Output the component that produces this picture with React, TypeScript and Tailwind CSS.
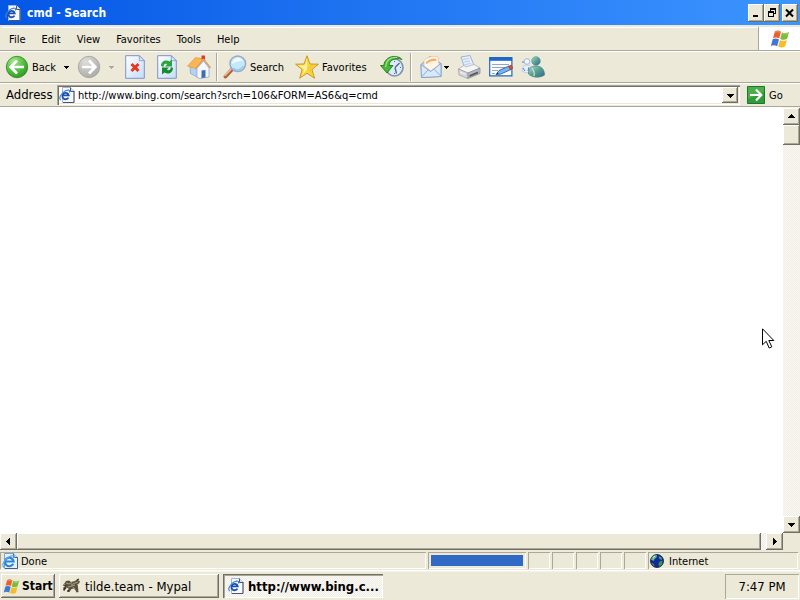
import React from 'react';

const raised =
  'bg-[#ece9d8] shadow-[inset_-1px_-1px_0_#716f64,inset_1px_1px_0_#ffffff,inset_-2px_-2px_0_#aca899]';
const panel = 'shadow-[inset_1px_1px_0_#aca899,inset_-1px_-1px_0_#ffffff]';
const track =
  'bg-[repeating-conic-gradient(#fbfaf7_0_25%,#efede3_0_50%)] bg-[length:2px_2px]';

function Caret({ dir = 'down' }: { dir?: 'down' | 'up' | 'left' | 'right' }) {
  const d = {
    down: 'M0 2h7v1h-1v1h-1v1h-1v1h-1v-1h-1v-1h-1v-1h-1z',
    up: 'M3 1h1v1h1v1h1v1h1v1h-7v-1h1v-1h1v-1h1z',
    left: 'M5 0v7h-1v-1h-1v-1h-1v-1h-1v-1h1v-1h1v-1h1v-1z',
    right: 'M2 0v7h1v-1h1v-1h1v-1h1v-1h-1v-1h-1v-1h-1v-1z',
  }[dir];
  return (
    <svg width="7" height="7" viewBox="0 0 7 7" className="shrink-0" shapeRendering="crispEdges">
      <path d={d} fill="#000" />
    </svg>
  );
}

function SmallCaret({ color = '#000' }: { color?: string }) {
  return (
    <svg width="5" height="5" viewBox="0 0 5 5" className="shrink-0" shapeRendering="crispEdges">
      <path d="M0 1h5v1h-1v1h-1v1h-1v-1h-1v-1h-1z" fill={color} />
    </svg>
  );
}

function IeIcon() {
  return (
    <svg width="16" height="16" viewBox="0 0 16 16" className="shrink-0">
      <path d="M3.500.500h8l3.500 3.500v11.500h-11.500z" fill="#f6f9ff" stroke="#a9b3c9" />
      <path d="M11.500.500v4h4" fill="#d5dff0" stroke="#4c5568" />
      <path d="M15 4.500v11H4" fill="none" stroke="#4c5568" />
      <path d="M9.400 10.600A3.200 3.200 0 1 1 9.700 8.300H4" fill="none" stroke="#1c50ae" strokeWidth="1.800" />
      <path d="M2 13C-1 12 2 6 6.500 3.800 9.500 2.400 11.500 3 10.300 5.600" fill="none" stroke="#3c83da" strokeWidth="1.200" />
    </svg>
  );
}

function PageStatusIcon() {
  return (
    <svg width="16" height="16" viewBox="0 0 16 16" className="shrink-0">
      <path d="M2.500.500h9l4 4v11h-13z" fill="#e6f1fd" stroke="#7ba0d2" />
      <path d="M11.500.500v4h4" fill="#c9dcf3" stroke="#42608f" />
      <path d="M15.500 4.500v11H3" fill="none" stroke="#42608f" />
      <path d="M11.200 10.800A4.300 4.300 0 1 1 11.600 8.500H4" fill="none" stroke="#2b86d8" strokeWidth="2.200" />
      <path d="M2 14.500C-1 12 2.500 6.500 7 4 10 2.300 13.500 1.800 12.500 5" fill="none" stroke="#5aaceb" strokeWidth="1.200" />
    </svg>
  );
}

function WinFlag({ size }: { size: number }) {
  return (
    <svg width={size} height={size} viewBox="0 0 20 20" className="shrink-0">
      <path d="M4.800 2.500C7 1 9 1.500 11 2.800L9.200 9.500C7.200 8.200 5 8 3 9.200z" fill="#e9602b" />
      <path d="M12 3.200c2 1.200 4.500 1.300 7-.2l-1.800 6.800c-2.400 1.400-4.800 1.200-7 .1z" fill="#7fba3c" />
      <path d="M2.700 10.200C4.800 9 7 9.200 9 10.500L7.200 17.200C5.200 16 3 15.700.9 17z" fill="#3e78d4" />
      <path d="M10 10.900c2 1.200 4.500 1.300 6.900 0l-1.800 6.700c-2.400 1.400-4.800 1.200-6.900 0z" fill="#f5bd2b" />
      <path d="M5.200 3.300c2-.9 3.500-.7 5 .2" fill="none" stroke="#f6a57e" strokeWidth=".8" />
      <path d="M12.500 4.500c2 .8 3.700.7 5.500 0" fill="none" stroke="#b4dc82" strokeWidth=".8" />
    </svg>
  );
}

function RoundArrow({ back = false }: { back?: boolean }) {
  return (
    <svg width="24" height="24" viewBox="0 0 24 24" className="shrink-0">
      <defs>
        <radialGradient id={back ? 'gBack' : 'gFwd'} cx=".35" cy=".25" r=".9">
          <stop offset="0" stopColor={back ? '#a5e68d' : '#dededa'} />
          <stop offset=".55" stopColor={back ? '#4fbb3c' : '#bdbdb9'} />
          <stop offset="1" stopColor={back ? '#248a1f' : '#a3a39f'} />
        </radialGradient>
      </defs>
      <circle cx="12" cy="12" r="10.700" fill={back ? 'url(#gBack)' : 'url(#gFwd)'} stroke={back ? '#2c8527' : '#a1a19d'} strokeWidth=".8" />
      <path
        d={back ? 'M12 5.500L5.700 12l6.300 6.500M6.500 12H19' : 'M12 5.500l6.300 6.500-6.300 6.500M17.500 12H5'}
        fill="none"
        stroke="#fff"
        strokeWidth="2.700"
      />
    </svg>
  );
}

function Page({ children }: { children: React.ReactNode }) {
  return (
    <svg width="20" height="24" viewBox="0 0 20 24" className="shrink-0">
      <defs>
        <linearGradient id="pageFill" x1="0" y1="0" x2="1" y2="1">
          <stop offset="0" stopColor="#ffffff" />
          <stop offset="1" stopColor="#c3dcfa" />
        </linearGradient>
      </defs>
      <path d="M.7.700h13.600l5 5v17.600H.7z" fill="url(#pageFill)" stroke="#7d93c9" />
      <path d="M14.300.700v5h5z" fill="#dce8fb" stroke="#7d93c9" strokeWidth=".8" />
      {children}
    </svg>
  );
}

function HomeIcon() {
  return (
    <svg width="24" height="24" viewBox="0 0 24 24" className="shrink-0">
      <path d="M3 11l8 1v10.500l-7.500-4z" fill="#b5d2f3" stroke="#7694c5" strokeWidth=".6" />
      <path d="M10 13L16.500 6l5.500 7v9l-9 1.500-3-1z" fill="#f4f8fe" stroke="#88a0c8" strokeWidth=".7" />
      <path d="M8.500 2.500l8 1.500L8.500 13.500.500 11z" fill="#fdb552" stroke="#e0913a" strokeWidth=".6" />
      <path d="M8.500 14L16.500 4.300 23.500 13" fill="none" stroke="#d9a269" strokeWidth="1.600" />
      <path d="M14.500.500h3.500v4.500l-1.500-1.500-2 1z" fill="#d3402b" />
      <path d="M14.500 15.500l4-.5v7.500l-4 .6z" fill="#3f6cae" />
    </svg>
  );
}

function SearchIcon() {
  return (
    <svg width="24" height="24" viewBox="0 0 24 24" className="shrink-0">
      <path d="M9 14.500l-6.500 7" stroke="#a96640" strokeWidth="3.800" strokeLinecap="round" />
      <path d="M8 14.200l-6 6.300" stroke="#f0bd97" strokeWidth="1.600" strokeLinecap="round" />
      <circle cx="14.800" cy="8.800" r="7.800" fill="#c5e8fb" stroke="#9aa9c8" strokeWidth="1.500" />
      <path d="M9 9c0-3.500 2.500-6 6-6 2.500 0 4.500 1.500 5 3-3-.5-7 .5-11 3z" fill="#f1faff" />
      <path d="M10 13c3 3 8 2.500 10.500-2" fill="none" stroke="#8fcaf2" strokeWidth="1.500" />
    </svg>
  );
}

function StarIcon() {
  return (
    <svg width="24" height="24" viewBox="0 0 24 24" className="shrink-0">
      <path d="M12 .8l3 8.200 8.400.2-6.500 5.300 2.700 8.700-7.600-5-7.300 5 2.400-8.700L.600 9.200 9 9z" fill="#fbd840" stroke="#cc9626" strokeLinejoin="round" />
      <path d="M12 3l-1.800 7.200-7 .2 6 4-2 6.300L12 14z" fill="#fff3a0" />
      <path d="M12 14l6 6-2.200-6 4.500-4-6 .5z" fill="#f8cb38" />
    </svg>
  );
}

function HistoryIcon() {
  return (
    <svg width="24" height="24" viewBox="0 0 24 24" className="shrink-0">
      <circle cx="14.500" cy="12.500" r="8.500" fill="#dcebfa" stroke="#7d90ac" strokeWidth="1.600" />
      <path d="M15 12.500L19.500 8M15 12.500l1.500 6" stroke="#526a91" strokeWidth="1.400" fill="none" />
      <path d="M14.500 6v1M21 12.500h-1M14.500 19v-1" stroke="#526a91" />
      <path d="M22 4.500C18-.5 5 0 3.800 10.500H.5l6.500 7.500 6-7.500H9C9.500 5 15 2 22 4.500z" fill="#48b934" stroke="#24751d" strokeWidth=".9" />
      <path d="M17 2.500C9 2 6 6.500 5.500 12" stroke="#a3e68d" fill="none" strokeWidth="1.200" />
    </svg>
  );
}

function MailIcon() {
  return (
    <svg width="22" height="24" viewBox="0 0 22 24" className="shrink-0">
      <path d="M1 9.500L10 1.500l11 7v13L1.500 22.500z" fill="#b9d5f5" stroke="#7f9cc4" strokeWidth=".9" />
      <path d="M4 5.500C8 1.500 14 .5 18 2l1 8-8 6-7-5z" fill="#fff5e8" stroke="#d9b898" strokeWidth=".6" />
      <path d="M5.500 7.500c3-3 7-4.500 10.500-3.800l.5 2.500c-4-.5-7 .5-10 3z" fill="#f5b06a" />
      <path d="M1 9.500l9.500 7L21 8.500v13L1.500 22.500z" fill="#d8e9fc" stroke="#7f9cc4" strokeWidth=".8" />
      <path d="M1.500 22l7-7.500M20.800 21l-7-7" stroke="#8dadd6" />
    </svg>
  );
}

function PrintIcon() {
  return (
    <svg width="24" height="24" viewBox="0 0 24 24" className="shrink-0">
      <path d="M4 2l9-1.500 4.500 11-9.500 2z" fill="#e7f1fe" stroke="#86a3cc" strokeWidth=".8" />
      <path d="M6 4.500l6-1M7 7l6-1M8 9.500l6-1" stroke="#a9bfdf" strokeWidth=".8" />
      <path d="M1.500 14l6-4 1 2 8.500-2.500 6 3.500-12 5z" fill="#f5f5f4" stroke="#a4a7ad" strokeWidth=".7" />
      <path d="M1.500 14l9.500 4v5.500L2 20z" fill="#d5d7dc" stroke="#979aa2" strokeWidth=".7" />
      <path d="M11 18l12-5v5.500l-12 5z" fill="#b6b8bd" stroke="#85888f" strokeWidth=".7" />
      <path d="M12.500 20l8.500-3.500v2l-8.500 3.500z" fill="#55595f" />
      <path d="M3 17l5 2" stroke="#f4f4f4" />
    </svg>
  );
}

function EditIcon() {
  return (
    <svg width="24" height="20" viewBox="0 0 24 20" className="shrink-0">
      <path d="M.7.700h22.200v18.200H.7z" fill="#f8fbff" stroke="#2666b5" strokeWidth="1.200" />
      <path d="M.5.500h22.600v3.300H.5z" fill="#1f66c5" />
      <path d="M3 7.500h17M3 10.500h13M3 13.500h6M3 16.500h3" stroke="#97a5ba" />
      <path d="M7 17.500l3-4L20 9l2 3.500-10.500 4.700z" fill="#76b4ec" stroke="#285490" strokeWidth=".8" />
      <path d="M7 17.500l1.700-2.200 1 1.500z" fill="#24374e" />
      <path d="M19.500 9.300l2.700-1.200 1.600 3-2.500 1.500z" fill="#df4a35" stroke="#9e2d20" strokeWidth=".6" />
    </svg>
  );
}

function PeopleIcon() {
  return (
    <svg width="24" height="24" viewBox="0 0 24 24" className="shrink-0">
      <defs>
        <linearGradient id="buddy" x1="0" y1="0" x2="1" y2="1">
          <stop offset="0" stopColor="#b4dccb" />
          <stop offset=".5" stopColor="#57a093" />
          <stop offset="1" stopColor="#2f6a88" />
        </linearGradient>
      </defs>
      <circle cx="6" cy="6.500" r="2.800" fill="#f1f7ff" stroke="#8aaad5" strokeWidth=".8" />
      <path d="M1 16c0-4 2-6 5-6 2 0 4 1 5 4l-2 4c-3 0-6-.5-8-2z" fill="#e6f0fc" stroke="#a5bee0" strokeWidth=".7" />
      <path d="M2 6v2M2 13l2 3M8 12l-1 4" stroke="#4f7fc4" />
      <circle cx="15" cy="6" r="4.300" fill="url(#buddy)" stroke="#4a8c86" strokeWidth=".6" />
      <path d="M7.500 19C7 13 11 11 15 11c5 0 8.500 3 8.500 9-4 3-12 3-16-1z" fill="url(#buddy)" stroke="#447d8a" strokeWidth=".7" />
      <path d="M11 13c2 3 3 5 2 8" stroke="#c1e6d4" strokeWidth="1.300" fill="none" />
    </svg>
  );
}

function GlobeIcon() {
  return (
    <svg width="14" height="14" viewBox="0 0 14 14" className="shrink-0">
      <circle cx="7" cy="7" r="6.500" fill="#0f2a9c" stroke="#0b1739" strokeWidth=".8" />
      <path d="M1 5.500C2 2.500 4 1 7 1L6.500 3.500 4.500 5 3.500 7z" fill="#6cb98c" />
      <path d="M8.500 2l3 1.500L12 6l-2.500-1z" fill="#4fa07c" />
      <path d="M9.500 7.500l3-1-.5 4-3 2.300L8.500 10z" fill="#3d9548" />
      <path d="M1.500 8.500l2.500 1.500.5 2.500-2-1.500z" fill="#3a8d46" />
      <path d="M3 3.500l2-1.500" stroke="#d5eedd" />
    </svg>
  );
}

function LizardIcon() {
  return (
    <svg width="18" height="16" viewBox="0 0 18 16" className="shrink-0">
      <path d="M1 6l2-3 3-.5 2 1.500 4-1 2-1.500 3 2-1 2-1.500.5.500 3 .5 5-2 .5-2-4-3 .5-2 3-2-.3 1-3.500-2-.7-2 3.500-1.500-.8.500-3 2.500-2z" fill="#5b513f" />
      <path d="M3 5l3 1 3-1.500M8 7l4-2 3-1M5 9l4-1 3-1M10 9l2 3" stroke="#b5a98f" fill="none" strokeWidth=".9" />
      <path d="M0 7l3 .5M1 11l2-1M14 2l2-1M5 12v2" stroke="#2c261c" strokeWidth="1.200" />
    </svg>
  );
}

function Divider() {
  return <span className="h-7 w-0.5 shrink-0 border-l border-[#aca899] bg-white" />;
}

function Caption({ children }: { children: React.ReactNode }) {
  return <span className="pt-0.5">{children}</span>;
}

function ScrollButton({ dir, label }: { dir: 'up' | 'down' | 'left' | 'right'; label: string }) {
  return (
    <button aria-label={label} className={`flex h-[17px] w-[17px] shrink-0 items-center justify-center ${raised}`}>
      <Caret dir={dir} />
    </button>
  );
}

const menus = ['File', 'Edit', 'View', 'Favorites', 'Tools', 'Help'];

export default function App() {
  return (
    <div className="relative flex h-screen flex-col overflow-hidden bg-[#ece9d8] font-['DejaVu_Sans_Condensed','DejaVu_Sans',sans-serif] text-[11px] leading-4 text-black">
      <header className="flex h-[25px] shrink-0 items-center bg-linear-to-r from-[#0456e5] to-[#3d95ff] pr-0.5 pl-[5px]">
        <IeIcon />
        <h1 className="ml-1.5 flex-1 text-xs font-bold text-white">cmd - Search</h1>
        <button aria-label="Minimize" className={`flex h-[18px] w-4 items-center justify-center ${raised}`}>
          <svg width="10" height="10" viewBox="0 0 10 10"><path d="M2 7h5v2H2z" /></svg>
        </button>
        <button aria-label="Restore" className={`flex h-[18px] w-4 items-center justify-center ${raised}`}>
          <svg width="10" height="10" viewBox="0 0 10 10" shapeRendering="crispEdges"><path d="M3 0h6v6H7V5h1V2H4v1H3zM1 3h6v6H1zM2 5v3h4V5z" fillRule="evenodd" /></svg>
        </button>
        <button aria-label="Close" className={`ml-0.5 flex h-[18px] w-4 items-center justify-center ${raised}`}>
          <svg width="10" height="10" viewBox="0 0 10 10"><path d="M1 1.500l7 7M8 1.500l-7 7" stroke="#000" strokeWidth="2" /></svg>
        </button>
      </header>

      <nav className="flex h-[26px] shrink-0 items-stretch border-b border-[#aca899] pt-0.5 pl-0.5">
        <div className="flex flex-1 items-center border-t border-white pt-0.5">
          {menus.map((m) => (
            <button key={m} className="mr-0.5 px-[7px]">{m}</button>
          ))}
        </div>
        <div className="flex w-[42px] items-center justify-center border-l border-[#aca899] bg-white">
          <WinFlag size={20} />
        </div>
      </nav>

      <div className="flex h-8 shrink-0 items-center border-t border-b border-t-white border-b-[#aca899] pl-[5px]">
        <button className="flex w-[51px] items-center gap-[3px]"><RoundArrow back /><Caption>Back</Caption></button>
        <button aria-label="Back history" className="ml-2"><SmallCaret /></button>
        <button aria-label="Forward" className="ml-2"><RoundArrow /></button>
        <button aria-label="Forward history" className="ml-2"><SmallCaret color="#aca899" /></button>
        <button aria-label="Stop" className="ml-[11px]">
          <Page><path d="M6.500 9l7 7M13.500 9l-7 7" stroke="#e5391d" strokeWidth="3" /></Page>
        </button>
        <button aria-label="Refresh" className="ml-3">
          <Page>
            <path d="M4 11C4 6 9 4 12.500 6.500L15 4.500v7H8l2.200-2.300C8.500 8 6.500 9 6.500 12z" fill="#2aa53e" />
            <path d="M16 13c0 5-5 7-8.500 4.500L5 19.500v-7h7l-2.200 2.300c2 1.200 4 .2 4-2.800z" fill="#168a2c" />
          </Page>
        </button>
        <button aria-label="Home" className="ml-2.5"><HomeIcon /></button>
        <span className="ml-[5px] flex"><Divider /></span>
        <button className="ml-[5px] flex w-[62px] items-center gap-[3px]"><SearchIcon /><Caption>Search</Caption></button>
        <button className="ml-2.5 flex w-[75px] items-center gap-[3px]"><StarIcon /><Caption>Favorites</Caption></button>
        <button aria-label="History" className="ml-2.5"><HistoryIcon /></button>
        <span className="ml-1.5 flex"><Divider /></span>
        <button aria-label="Mail" className="ml-2 flex items-center gap-0.5"><MailIcon /><SmallCaret /></button>
        <button aria-label="Print" className="ml-2"><PrintIcon /></button>
        <button aria-label="Edit page" className="ml-2"><EditIcon /></button>
        <button aria-label="Messenger" className="ml-2"><PeopleIcon /></button>
      </div>

      <form className="flex h-6 shrink-0 items-center border-t border-b border-t-white border-b-[#aca899] pl-1.5" onSubmit={(e) => e.preventDefault()}>
        <label htmlFor="address" className="w-[51px] text-[13px]">Address</label>
        <div className="flex h-5 flex-1 items-center bg-white px-0.5 shadow-[inset_1px_1px_0_#aca899,inset_2px_2px_0_#716f64,inset_-1px_-1px_0_#ffffff,inset_-2px_-2px_0_#ece9d8]">
          <IeIcon />
          <input id="address" defaultValue="http://www.bing.com/search?srch=106&FORM=AS6&q=cmd" className="ml-[3px] min-w-0 flex-1 bg-transparent pt-0.5 outline-none" />
          <button type="button" aria-label="Show addresses" className={`flex h-4 w-4 items-center justify-center ${raised}`}><Caret /></button>
        </div>
        <button className="mr-4 ml-[7px] flex w-[37px] items-center gap-1">
          <svg width="18" height="18" viewBox="0 0 18 18" className="shrink-0">
            <path d="M.5.500h17v17H.5z" fill="#319a3a" stroke="#1d7728" />
            <path d="M1 1h16v5L1 13z" fill="#5dbb59" opacity=".6" />
            <path d="M3 9h11M9 3.500L14.300 9 9 14.500" fill="none" stroke="#fff" strokeWidth="2.200" />
          </svg>
          <Caption>Go</Caption>
        </button>
      </form>

      <div className="flex min-h-0 flex-1">
        <main className="flex-1 bg-white" />
        <div className={`flex w-[17px] flex-col pt-px ${track}`}>
          <ScrollButton dir="up" label="Scroll up" />
          <div className={`h-5 ${raised}`} />
          <div className="flex-1" />
          <ScrollButton dir="down" label="Scroll down" />
        </div>
      </div>
      <div className="flex h-[17px] shrink-0 pr-[17px]">
        <ScrollButton dir="left" label="Scroll left" />
        <div className={`flex-1 ${raised}`} />
        <div className={`w-[5px] ${track}`} />
        <ScrollButton dir="right" label="Scroll right" />
      </div>

      <footer className="flex h-[21px] shrink-0 gap-0.5 border-b border-white pt-0.5 pr-0.5 pb-px">
        <div className={`flex flex-1 items-center gap-[3px] pl-0.5 ${panel}`}><PageStatusIcon /><Caption>Done</Caption></div>
        <div className={`w-[98px] p-[3px] ${panel}`}>
          <div role="progressbar" aria-label="Page loading" className="h-full bg-[#316ac5]" />
        </div>
        <div className={`w-[22px] ${panel}`} />
        <div className={`w-[22px] ${panel}`} />
        <div className={`w-[22px] ${panel}`} />
        <div className={`w-[22px] ${panel}`} />
        <div className={`w-[22px] ${panel}`} />
        <div className={`flex w-[150px] items-center gap-[5px] pl-0.5 ${panel}`}><GlobeIcon /><Caption>Internet</Caption></div>
      </footer>

      <div className="flex h-[29px] shrink-0 items-center gap-1 border-t border-[#f6f4e8] pr-px pl-px text-[13px]">
        <button className={`flex h-6 w-[54px] items-center gap-0.5 pl-0.5 text-xs font-bold ${raised}`}><WinFlag size={17} />Start</button>
        <button className={`flex h-6 w-40 items-center gap-1 pl-1 ${raised}`}><LizardIcon /><Caption>tilde.team - Mypal</Caption></button>
        <button className={`flex h-6 w-40 items-center gap-1 pl-[5px] font-bold shadow-[inset_1px_1px_0_#716f64,inset_2px_2px_0_#aca899,inset_-1px_-1px_0_#ffffff] ${track}`}><IeIcon /><Caption>http://www.bing.c...</Caption></button>
        <div className={`ml-auto flex h-[25px] w-[74px] items-center justify-center ${panel}`}><Caption>7:47 PM</Caption></div>
      </div>

      <svg width="13" height="21" viewBox="0 0 13 21" className="pointer-events-none absolute top-[328px] left-[762px]">
        <path d="M.5.800v16l3.700-3.500 3 6.700 2.600-1.200-3-6.300h5z" fill="#fff" stroke="#000" />
      </svg>
    </div>
  );
}
